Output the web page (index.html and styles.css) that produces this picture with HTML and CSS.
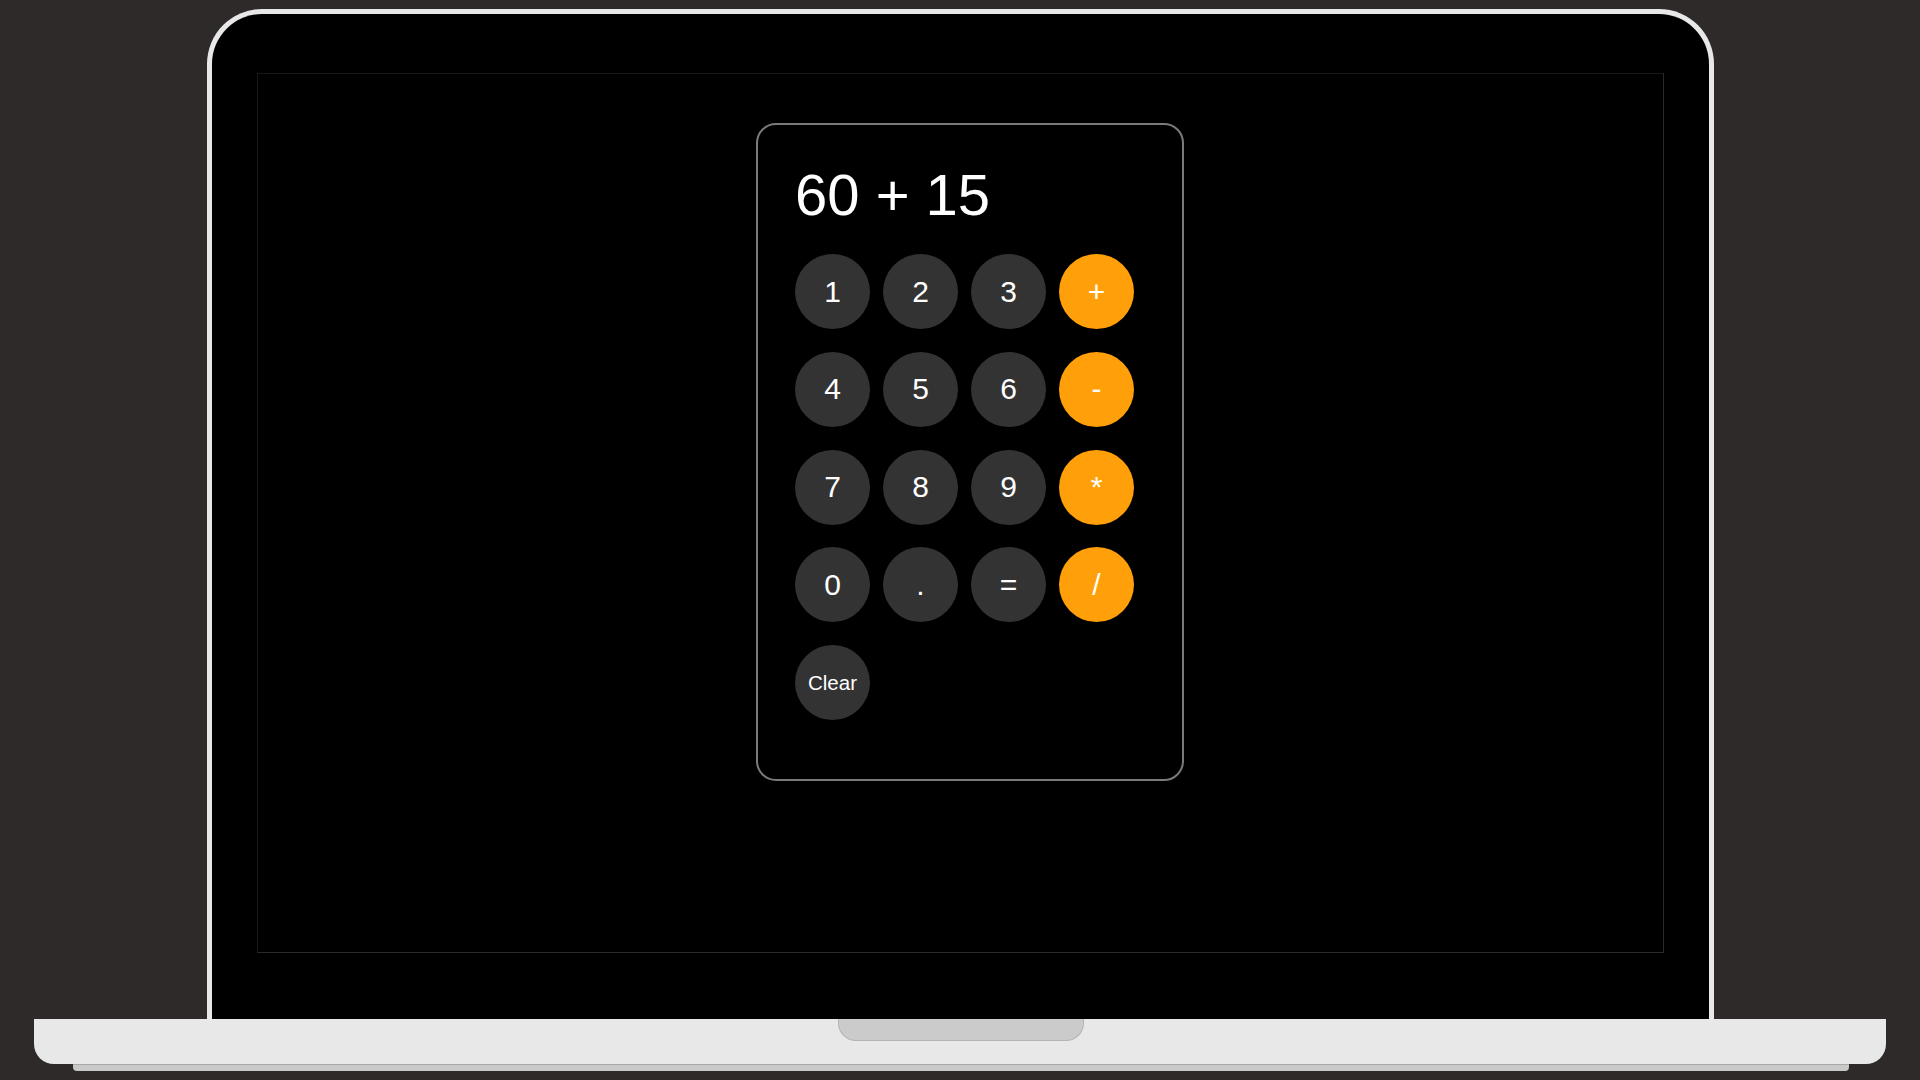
FILE: index.html
```html
<!DOCTYPE html>
<html lang="en">
<head>
<meta charset="utf-8">
<title>Calculator</title>
<link rel="stylesheet" href="styles.css">
</head>
<body>
<div class="device">
  <div class="lid">
    <div class="screen">
      <div class="calculator">
        <div class="display">60 + 15</div>
        <div class="keys">
          <button class="key">1</button>
          <button class="key">2</button>
          <button class="key">3</button>
          <button class="key op">+</button>
          <button class="key">4</button>
          <button class="key">5</button>
          <button class="key">6</button>
          <button class="key op">-</button>
          <button class="key">7</button>
          <button class="key">8</button>
          <button class="key">9</button>
          <button class="key op">*</button>
          <button class="key">0</button>
          <button class="key">.</button>
          <button class="key">=</button>
          <button class="key op">/</button>
          <button class="key clear">Clear</button>
        </div>
      </div>
    </div>
  </div>
  <div class="base"><div class="notch"></div></div>
  <div class="foot"></div>
</div>
</body>
</html>
```
FILE: styles.css
```css
* { box-sizing: border-box; }
html, body {
  margin: 0;
  padding: 0;
  width: 1920px;
  height: 1080px;
  overflow: hidden;
  background: #2e2a29;
  font-family: "Liberation Sans", Arial, Helvetica, sans-serif;
}
.device {
  display: flex;
  flex-direction: column;
  align-items: center;
  padding-top: 9px;
}
.lid {
  width: 1507px;
  height: 1010px;
  margin-left: 1px;
  background: #000;
  border: 5px solid #e8e8e8;
  border-bottom: 0;
  border-radius: 55px 55px 0 0;
  padding: 59px 0 0 45px;
}
.screen {
  width: 1407px;
  height: 880px;
  border: 1px solid #191919;
  border-right-color: #2a2a2a;
  border-bottom-color: #2a2a2a;
  padding: 49px 0 0 498px;
}
.calculator {
  width: 428px;
  border: 2px solid #7a7a7a;
  border-radius: 20px;
  padding: 36px 48px 59px 37px;
}
.display {
  color: #fff;
  font-size: 58px;
  line-height: 67px;
  height: 67px;
  margin-bottom: 26px;
  white-space: nowrap;
}
.keys {
  display: grid;
  grid-template-columns: repeat(4, 75px);
  column-gap: 13px;
  row-gap: 22.75px;
}
.key {
  width: 75px;
  height: 75px;
  border: 0;
  border-radius: 50%;
  background: #333333;
  color: #fff;
  font-family: "Liberation Sans", Arial, Helvetica, sans-serif;
  font-size: 30px;
  padding: 0;
  display: flex;
  align-items: center;
  justify-content: center;
}
.key.op { background: #ff9f0a; }
.key.clear { font-size: 20.5px; }
.base {
  width: 1852px;
  height: 45px;
  background: #e8e8e8;
  border-radius: 0 0 20px 20px;
  display: flex;
  justify-content: center;
}
.notch {
  width: 246px;
  height: 22px;
  margin-left: 2px;
  background: #cbcbcb;
  border: 1px solid #b4b4b4;
  border-top: 0;
  border-radius: 0 0 18px 18px;
}
.foot {
  width: 1776px;
  height: 7px;
  margin-left: 2px;
  background: #c9c9c9;
  border-top: 1px solid #a8a8a8;
  border-radius: 0 0 4px 4px;
}
```
